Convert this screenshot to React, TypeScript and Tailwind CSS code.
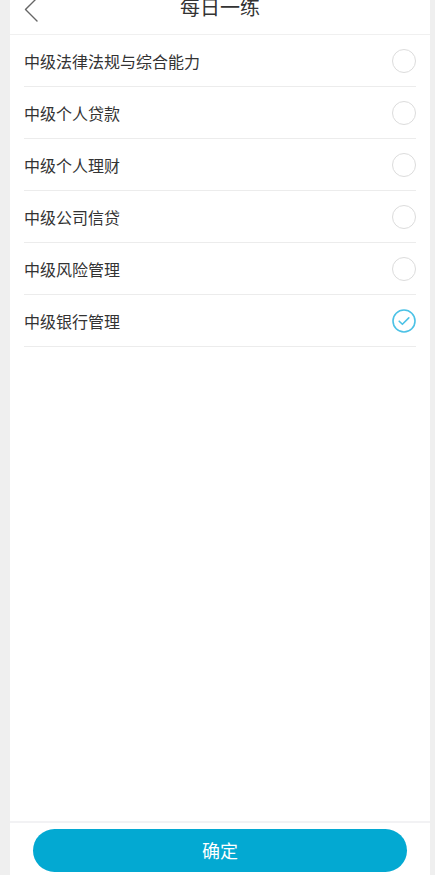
const subjects = [
  '中级法律法规与综合能力',
  '中级个人贷款',
  '中级个人理财',
  '中级公司信贷',
  '中级风险管理',
  '中级银行管理',
]

function Radio({ checked }: { checked: boolean }) {
  if (!checked) {
    return <span className="w-6 h-6 rounded-full border-[1.5px] border-[#dcdcdc]" />
  }
  return (
    <svg width="24" height="24" viewBox="0 0 24 24" fill="none">
      <circle cx="12" cy="12" r="11" stroke="#4cc2e6" strokeWidth="1.6" />
      <path d="M7.2 12.2l3.2 3.1 6.4-6.4" stroke="#4cc2e6" strokeWidth="1.6" strokeLinecap="round" strokeLinejoin="round" />
    </svg>
  )
}

export default function App() {
  const selected = 5

  return (
    <div className="h-[875px] bg-[#efefef] pl-[10px] pr-[5px] flex flex-col font-['Noto_Sans_CJK_SC',sans-serif]">
      <div className="flex-1 bg-white flex flex-col">
        <div className="relative h-[35px] border-b border-[#f0f0f0] flex justify-center">
          {/* back arrow, cut at the top like the screenshot */}
          <svg className="absolute left-[14px] top-0" width="14" height="22" viewBox="0 0 14 22" fill="none">
            <path d="M13 -2L1.5 9.5 13 21" stroke="#666" strokeWidth="1.4" strokeLinecap="round" strokeLinejoin="round" />
          </svg>
          <span className="text-[20px] leading-[20px] -mt-[3px] text-[#333]">每日一练</span>
        </div>
        <ul className="px-[14px]">
          {subjects.map((name, i) => (
            <li key={name} className="h-[52px] flex items-center justify-between border-b border-[#ececec]">
              <span className="text-[16px] text-[#333]">{name}</span>
              <Radio checked={i === selected} />
            </li>
          ))}
        </ul>
      </div>
      <div className="bg-white border-t-2 border-[#f2f2f4] h-[54px] flex items-start pt-[6px] px-[23px]">
        <button className="w-full h-[43px] rounded-full bg-[#03a9d2] text-white text-[18px]">确定</button>
      </div>
    </div>
  )
}
